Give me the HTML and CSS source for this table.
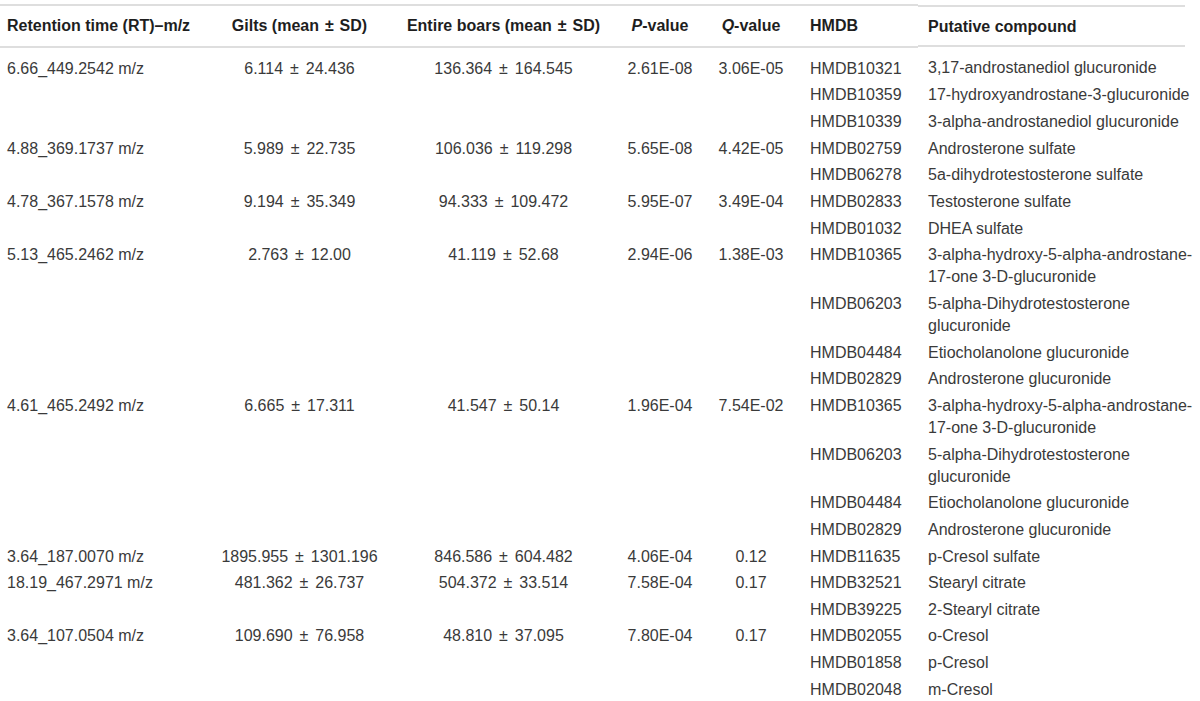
FILE: index.html
```html
<!DOCTYPE html>
<html lang="en">
<head>
<meta charset="utf-8">
<title>Putative compounds</title>
<link rel="stylesheet" href="styles.css">
</head>
<body>
<table class="data">
  <colgroup>
    <col class="c-rt"><col class="c-gilts"><col class="c-boars"><col class="c-p"><col class="c-q"><col class="c-hmdb"><col class="c-cmp">
  </colgroup>
  <thead>
    <tr>
      <th class="left rt">Retention time (RT)–m/z</th>
      <th>Gilts (mean <span class="pm">±</span> SD)</th>
      <th>Entire boars (mean <span class="pm">±</span> SD)</th>
      <th><i>P</i>-value</th>
      <th><i>Q</i>-value</th>
      <th class="left hm">HMDB</th>
      <th class="left cmp last">Putative compound</th>
    </tr>
  </thead>
  <tbody>
    <tr class="first">
      <td class="left rt" rowspan="3">6.66_449.2542 m/z</td>
      <td rowspan="3">6.114 <span class="pm">±</span> 24.436</td>
      <td rowspan="3">136.364 <span class="pm">±</span> 164.545</td>
      <td rowspan="3">2.61E-08</td>
      <td rowspan="3">3.06E-05</td>
      <td class="left hm">HMDB10321</td>
      <td class="left cmp">3,17-androstanediol glucuronide</td>
    </tr>
    <tr><td class="left hm">HMDB10359</td><td class="left cmp">17-hydroxyandrostane-3-glucuronide</td></tr>
    <tr><td class="left hm">HMDB10339</td><td class="left cmp">3-alpha-androstanediol glucuronide</td></tr>

    <tr>
      <td class="left rt" rowspan="2">4.88_369.1737 m/z</td>
      <td rowspan="2">5.989 <span class="pm">±</span> 22.735</td>
      <td rowspan="2">106.036 <span class="pm">±</span> 119.298</td>
      <td rowspan="2">5.65E-08</td>
      <td rowspan="2">4.42E-05</td>
      <td class="left hm">HMDB02759</td>
      <td class="left cmp">Androsterone sulfate</td>
    </tr>
    <tr><td class="left hm">HMDB06278</td><td class="left cmp">5a-dihydrotestosterone sulfate</td></tr>

    <tr>
      <td class="left rt" rowspan="2">4.78_367.1578 m/z</td>
      <td rowspan="2">9.194 <span class="pm">±</span> 35.349</td>
      <td rowspan="2">94.333 <span class="pm">±</span> 109.472</td>
      <td rowspan="2">5.95E-07</td>
      <td rowspan="2">3.49E-04</td>
      <td class="left hm">HMDB02833</td>
      <td class="left cmp">Testosterone sulfate</td>
    </tr>
    <tr><td class="left hm">HMDB01032</td><td class="left cmp">DHEA sulfate</td></tr>

    <tr>
      <td class="left rt" rowspan="4">5.13_465.2462 m/z</td>
      <td rowspan="4">2.763 <span class="pm">±</span> 12.00</td>
      <td rowspan="4">41.119 <span class="pm">±</span> 52.68</td>
      <td rowspan="4">2.94E-06</td>
      <td rowspan="4">1.38E-03</td>
      <td class="left hm">HMDB10365</td>
      <td class="left cmp">3-alpha-hydroxy-5-alpha-androstane-17-one 3-D-glucuronide</td>
    </tr>
    <tr><td class="left hm">HMDB06203</td><td class="left cmp">5-alpha-Dihydrotestosterone glucuronide</td></tr>
    <tr><td class="left hm">HMDB04484</td><td class="left cmp">Etiocholanolone glucuronide</td></tr>
    <tr><td class="left hm">HMDB02829</td><td class="left cmp">Androsterone glucuronide</td></tr>

    <tr>
      <td class="left rt" rowspan="4">4.61_465.2492 m/z</td>
      <td rowspan="4">6.665 <span class="pm">±</span> 17.311</td>
      <td rowspan="4">41.547 <span class="pm">±</span> 50.14</td>
      <td rowspan="4">1.96E-04</td>
      <td rowspan="4">7.54E-02</td>
      <td class="left hm">HMDB10365</td>
      <td class="left cmp">3-alpha-hydroxy-5-alpha-androstane-17-one 3-D-glucuronide</td>
    </tr>
    <tr><td class="left hm">HMDB06203</td><td class="left cmp">5-alpha-Dihydrotestosterone glucuronide</td></tr>
    <tr><td class="left hm">HMDB04484</td><td class="left cmp">Etiocholanolone glucuronide</td></tr>
    <tr><td class="left hm">HMDB02829</td><td class="left cmp">Androsterone glucuronide</td></tr>

    <tr>
      <td class="left rt">3.64_187.0070 m/z</td>
      <td>1895.955 <span class="pm">±</span> 1301.196</td>
      <td>846.586 <span class="pm">±</span> 604.482</td>
      <td>4.06E-04</td>
      <td>0.12</td>
      <td class="left hm">HMDB11635</td>
      <td class="left cmp">p-Cresol sulfate</td>
    </tr>

    <tr>
      <td class="left rt" rowspan="2">18.19_467.2971 m/z</td>
      <td rowspan="2">481.362 <span class="pm">±</span> 26.737</td>
      <td rowspan="2">504.372 <span class="pm">±</span> 33.514</td>
      <td rowspan="2">7.58E-04</td>
      <td rowspan="2">0.17</td>
      <td class="left hm">HMDB32521</td>
      <td class="left cmp">Stearyl citrate</td>
    </tr>
    <tr><td class="left hm">HMDB39225</td><td class="left cmp">2-Stearyl citrate</td></tr>

    <tr>
      <td class="left rt" rowspan="3">3.64_107.0504 m/z</td>
      <td rowspan="3">109.690 <span class="pm">±</span> 76.958</td>
      <td rowspan="3">48.810 <span class="pm">±</span> 37.095</td>
      <td rowspan="3">7.80E-04</td>
      <td rowspan="3">0.17</td>
      <td class="left hm">HMDB02055</td>
      <td class="left cmp">o-Cresol</td>
    </tr>
    <tr><td class="left hm">HMDB01858</td><td class="left cmp">p-Cresol</td></tr>
    <tr><td class="left hm">HMDB02048</td><td class="left cmp">m-Cresol</td></tr>
  </tbody>
</table>
</body>
</html>
```
FILE: styles.css
```css
html, body {
  margin: 0;
  padding: 0;
  background: #ffffff;
}

body {
  font-family: "Liberation Sans", Arial, Helvetica, sans-serif;
  font-size: 16px;
  color: #3a3a3a;
}

.data {
  margin-top: 4px;
  width: 1200px;
  table-layout: fixed;
  border-collapse: collapse;
  border-spacing: 0;
}

.c-rt { width: 210px; }
.c-gilts { width: 179px; }
.c-boars { width: 229px; }
.c-p { width: 84px; }
.c-q { width: 98px; }
.c-hmdb { width: 118px; }
.c-cmp { width: 282px; }

.data th,
.data td {
  padding: 2.33px 0 2.34px 0;
  line-height: 22px;
  text-align: center;
  vertical-align: top;
  font-weight: normal;
}

.data th {
  font-weight: bold;
  color: #1e1e1e;
  padding-top: 9px;
  padding-bottom: 7px;
  border-top: 2px solid #dedede;
  border-bottom: 2px solid #dedede;
  white-space: nowrap;
}

.data th.last {
  border-top: none;
  border-bottom: none;
  padding-top: 11px;
  padding-bottom: 9px;
  background:
    linear-gradient(#dedede, #dedede) left top / calc(100% - 15px) 2px no-repeat,
    linear-gradient(#dedede, #dedede) left bottom / calc(100% - 15px) 2px no-repeat;
}

.data tr.first td {
  padding-top: 9.67px;
}

.data .pm {
  padding: 0 2.5px;
}

.data th .pm {
  padding: 0 1.5px;
}

.data .left { text-align: left; }
.data .rt { padding-left: 7px; }
.data .hm { padding-left: 10px; }
.data .cmp { padding-left: 10px; padding-right: 0; }
```
